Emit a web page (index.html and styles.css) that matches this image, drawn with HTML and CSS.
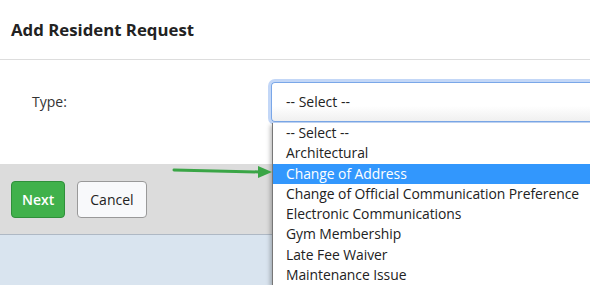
FILE: index.html
```html
<!DOCTYPE html>
<html lang="en">
<head>
    <meta charset="UTF-8">
    <title>Add Resident Request</title>
    <link rel="stylesheet" href="styles.css">
</head>
<body>
    <div class="modal">
        <div class="modal-header">
            <h4>Add Resident Request</h4>
        </div>
        <div class="modal-body">
            <label class="field-label">Type:</label>
            <div class="select-box">-- Select --</div>
        </div>
        <div class="modal-footer">
            <button class="btn btn-next">Next</button>
            <button class="btn btn-cancel">Cancel</button>
        </div>
    </div>
    <div class="backdrop"></div>

    <ul class="dropdown">
        <li>-- Select --</li>
        <li>Architectural</li>
        <li class="active">Change of Address</li>
        <li>Change of Official Communication Preference</li>
        <li>Electronic Communications</li>
        <li>Gym Membership</li>
        <li>Late Fee Waiver</li>
        <li>Maintenance Issue</li>
    </ul>

    <svg class="arrow" width="104" height="14" viewBox="0 0 104 14">
        <line x1="2" y1="5" x2="88" y2="7" stroke="#3aa546" stroke-width="3" stroke-linecap="round"/>
        <polygon points="86,1 100,7 86,13" fill="#3aa546"/>
    </svg>
</body>
</html>
```

FILE: styles.css
```css
body {
    margin: 0;
    font-family: "Open Sans", "Noto Sans", sans-serif;
    color: #222;
    background: #fff;
    overflow: hidden;
}
.modal-header {
    height: 59px;
    border-bottom: 1px solid #ddd;
    padding: 0 11px;
    display: flex;
    align-items: center;
}
.modal-header h4 {
    margin: 0;
    font-size: 16.8px;
    font-weight: bold;
    color: #222;
}
.modal-body {
    height: 104px;
    display: flex;
    align-items: flex-start;
    padding: 22px 0 0 32px;
    box-sizing: border-box;
}
.field-label {
    width: 239px;
    font-size: 14px;
    line-height: 40px;
    color: #333;
}
.select-box {
    flex: 1;
    height: 40px;
    box-sizing: border-box;
    border: 1px solid #7aa7e8;
    border-right: none;
    border-radius: 4px 0 0 4px;
    box-shadow: 0 0 0 3px #c3d7f7;
    background: linear-gradient(#fff 60%, #f0f0f0);
    padding-left: 14px;
    font-size: 14px;
    line-height: 38px;
    color: #222;
}
.modal-footer {
    height: 70px;
    background: #dcdcdc;
    display: flex;
    align-items: center;
    gap: 12px;
    padding-left: 11px;
}
.btn {
    height: 37px;
    border-radius: 4px;
    font-family: inherit;
    font-size: 14px;
    padding: 0 10px;
}
.btn-next {
    background: #40b14b;
    border: 1px solid #2f8f3a;
    color: #fff;
    font-weight: 600;
}
.btn-cancel {
    background: #f8f9fb;
    border: 1px solid #999;
    color: #222;
    padding: 0 12px;
}
.backdrop {
    height: 60px;
    background: #d9e4ef;
    border-top: 1px solid #aeb8c4;
}
.dropdown {
    position: absolute;
    left: 272px;
    top: 123px;
    width: 330px;
    margin: 0;
    padding: 0;
    list-style: none;
    background: #fff;
    border-left: 1px solid #777;
    box-shadow: -2px 2px 4px rgba(0, 0, 0, 0.25);
}
.dropdown li {
    height: 20.3px;
    line-height: 20.3px;
    padding-left: 13px;
    font-size: 13.9px;
    letter-spacing: -0.05px;
    color: #222;
    white-space: nowrap;
}
.dropdown li.active {
    background: #3297fd;
    color: #fff;
}
.arrow {
    position: absolute;
    left: 172px;
    top: 165px;
}
```
